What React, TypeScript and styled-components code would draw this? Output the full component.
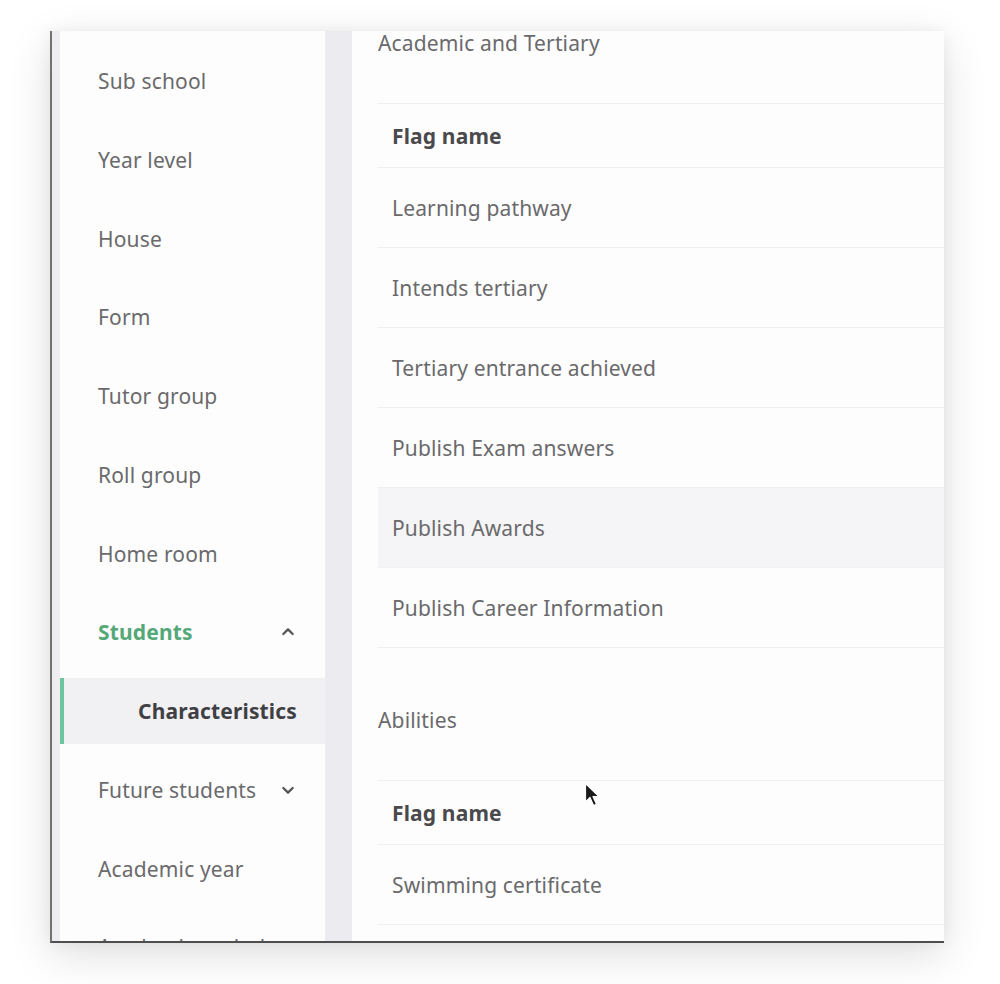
import React from "react";
import styled, { createGlobalStyle } from "styled-components";

const Global = createGlobalStyle`
  html, body { margin: 0; padding: 0; background: #ffffff; }
  body { font-family: "Noto Sans", "Open Sans", Arial, sans-serif; }
  * { box-sizing: border-box; }
`;

const Stage = styled.div`
  width: 1000px;
  height: 984px;
  padding: 31px 0 0 50px;
  background: #ffffff;
  overflow: hidden;
`;

const Frame = styled.div`
  position: relative;
  width: 894px;
  height: 912px;
  display: flex;
  overflow: hidden;
  background: #fdfdfd;
  border-left: 2px solid #727274;
  border-bottom: 2px solid #4e4e50;
  box-shadow: 0 12px 40px rgba(0, 0, 0, 0.13), 0 0 14px rgba(0, 0, 0, 0.05);
`;

const EdgeStrip = styled.div`
  width: 8px;
  flex: none;
  background: #eeeef2;
`;

const Sidebar = styled.nav`
  width: 265px;
  flex: none;
  background: #fdfdfd;
  padding-top: 17px;
  display: flex;
  flex-direction: column;
  gap: 12.75px;
`;

const NavItem = styled.div<{ $active?: boolean; $open?: boolean; $sub?: boolean }>`
  position: relative;
  height: 66px;
  flex: none;
  display: flex;
  align-items: center;
  justify-content: space-between;
  padding: 0 29px 0 ${(p) => (p.$sub ? "78px" : "38px")};
  font-size: 21px;
  letter-spacing: 0.15px;
  color: ${(p) => (p.$sub ? "#3f3f44" : p.$open ? "#55a878" : "#6a6a6c")};
  font-weight: ${(p) => (p.$sub || p.$open ? 700 : 400)};
  background: ${(p) => (p.$active ? "#f1f1f4" : "transparent")};
  &::before {
    content: "";
    display: ${(p) => (p.$active ? "block" : "none")};
    position: absolute;
    left: 0;
    top: 0;
    bottom: 0;
    width: 4px;
    background: #6cc59c;
  }
`;

const Gutter = styled.div`
  width: 27px;
  flex: none;
  background: #ececf0;
`;

const Main = styled.main`
  flex: 1;
  min-width: 0;
  padding-left: 26px;
  background: #fdfdfd;
`;

const SectionTitle = styled.h2<{ $gapTop?: number }>`
  margin: ${(p) => p.$gapTop ?? 0}px 0 48px 0;
  height: 24px;
  line-height: 24px;
  font-size: 21px;
  font-weight: 400;
  color: #6a6a6c;
  letter-spacing: 0.15px;
`;

const Table = styled.div`
  display: flex;
  flex-direction: column;
  border-bottom: 1px solid #f0f0f2;
`;

const Row = styled.div<{ $header?: boolean; $hover?: boolean }>`
  height: ${(p) => (p.$header ? "64px" : "80px")};
  display: flex;
  align-items: center;
  padding-left: 14px;
  border-top: 1px solid #f0f0f2;
  font-size: 21px;
  letter-spacing: 0.15px;
  font-weight: ${(p) => (p.$header ? 700 : 400)};
  color: ${(p) => (p.$header ? "#4a4a4d" : "#6a6a6c")};
  background: ${(p) => (p.$hover ? "#f5f5f7" : "transparent")};
`;

const Cursor = styled.svg`
  position: absolute;
  left: 532px;
  top: 751px;
  width: 18px;
  height: 26px;
`;

const Chevron = ({ up }: { up?: boolean }) => (
  <svg width="16" height="16" viewBox="0 0 24 24" fill="none" stroke="#555" strokeWidth="3.4" strokeLinecap="round" strokeLinejoin="round">
    {up ? <path d="M5 15l7-7 7 7" /> : <path d="M5 9l7 7 7-7" />}
  </svg>
);

const navItems = ["Sub school", "Year level", "House", "Form", "Tutor group", "Roll group", "Home room"];

const academic = [
  "Learning pathway",
  "Intends tertiary",
  "Tertiary entrance achieved",
  "Publish Exam answers",
  "Publish Awards",
  "Publish Career Information",
];

export default function App() {
  return (
    <>
      <Global />
      <Stage>
        <Frame>
          <EdgeStrip />
          <Sidebar>
            {navItems.map((t) => (
              <NavItem key={t}>{t}</NavItem>
            ))}
            <NavItem $open>
              Students
              <Chevron up />
            </NavItem>
            <NavItem $active $sub>
              Characteristics
            </NavItem>
            <NavItem>
              Future students
              <Chevron />
            </NavItem>
            <NavItem>Academic year</NavItem>
            <NavItem>Academic period</NavItem>
          </Sidebar>
          <Gutter />
          <Main>
            <SectionTitle>Academic and Tertiary</SectionTitle>
            <Table>
              <Row $header>Flag name</Row>
              {academic.map((t) => (
                <Row key={t} $hover={t === "Publish Awards"}>
                  {t}
                </Row>
              ))}
            </Table>
            <SectionTitle $gapTop={60}>Abilities</SectionTitle>
            <Table>
              <Row $header>Flag name</Row>
              <Row>Swimming certificate</Row>
              <Row>Music certificate</Row>
            </Table>
          </Main>
          <Cursor viewBox="0 0 18 26">
            <path d="M1.5 1.5 L1.5 20 L6 15.5 L9.5 23.5 L12.5 22.2 L9 14.5 L15 14.5 Z" fill="#1a1a1a" stroke="#ffffff" strokeWidth="1.2" strokeLinejoin="round" />
          </Cursor>
        </Frame>
      </Stage>
    </>
  );
}
